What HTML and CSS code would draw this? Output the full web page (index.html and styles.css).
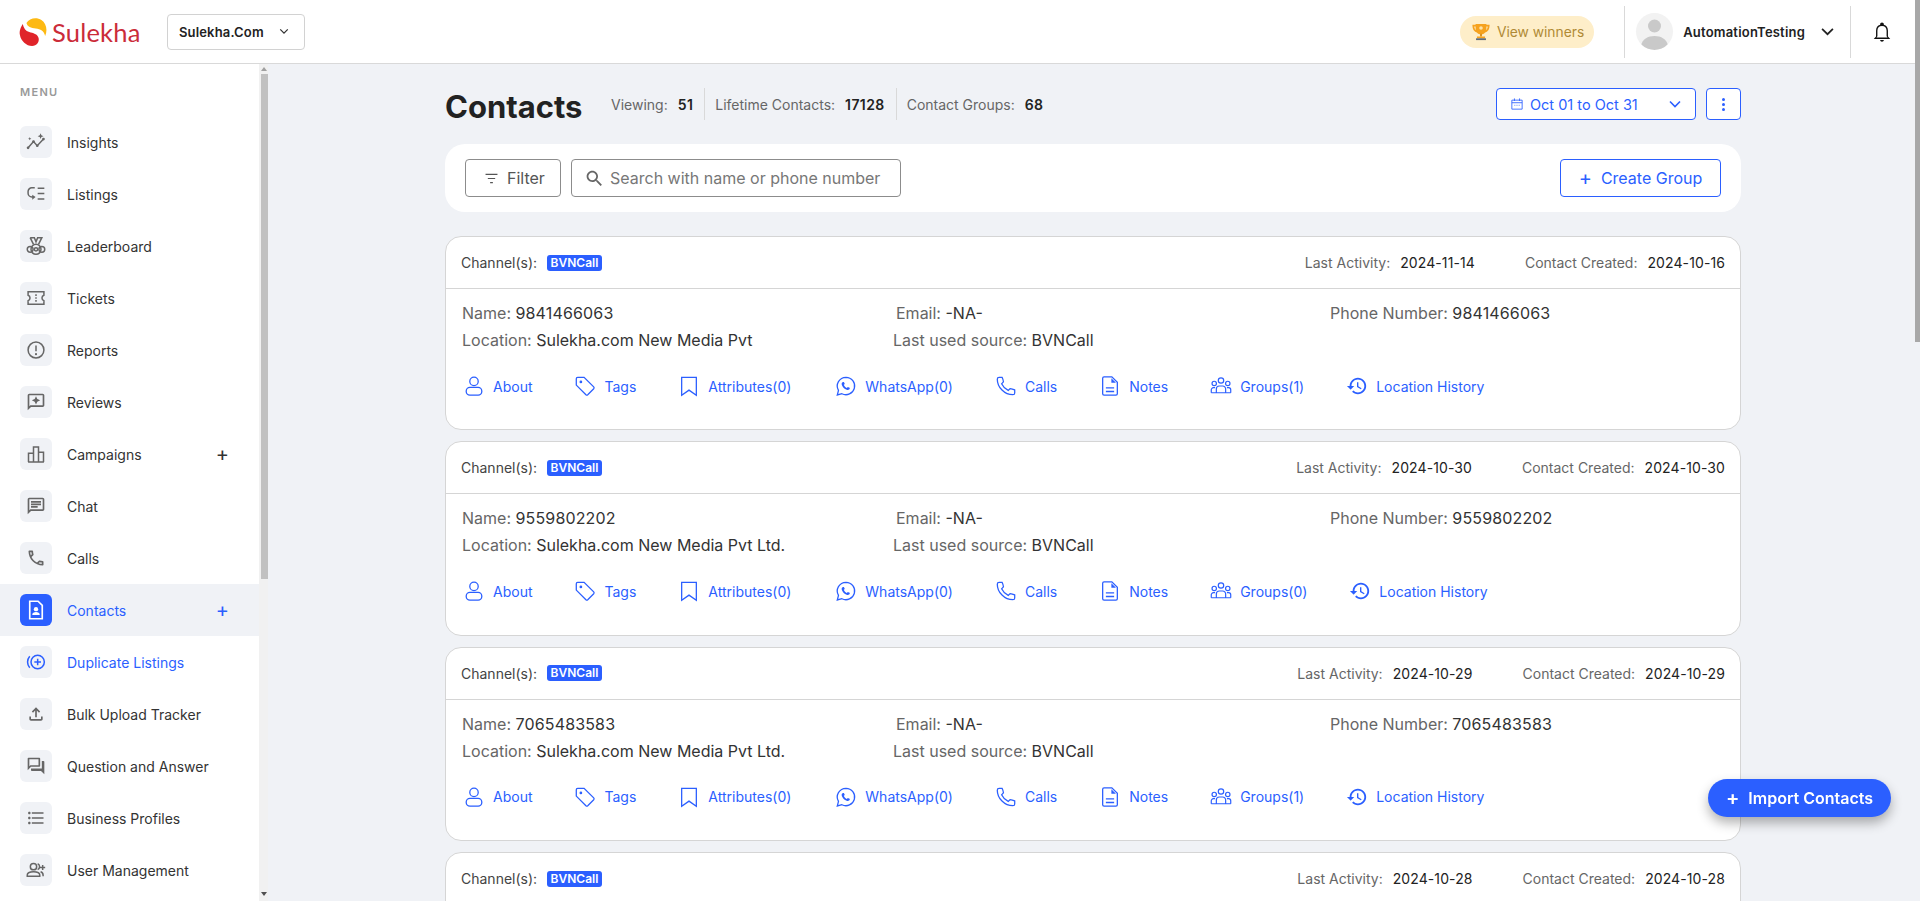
FILE: index.html
```html
<!DOCTYPE html>
<html lang="en">
<head>
    <meta charset="UTF-8">
    <meta name="viewport" content="width=device-width, initial-scale=1.0">
    <title>Contacts</title>
    <link rel="stylesheet" href="styles.css">
</head>
<body>
    <svg class="sprite" xmlns="http://www.w3.org/2000/svg">
        <symbol id="i-about" viewBox="0 0 24 24"><circle cx="12" cy="7" r="4.6"/><rect x="3.5" y="13.5" width="17" height="8.5" rx="4"/></symbol>
        <symbol id="i-tag" viewBox="0 0 24 24"><path d="M2.5 4A1.5 1.5 0 0 1 4 2.5H11L21.5 13a1.5 1.5 0 0 1 0 2L15 21.5a1.5 1.5 0 0 1-2 0L2.5 11z"/><circle cx="7.5" cy="7.5" r=".8"/></symbol>
        <symbol id="i-mark" viewBox="0 0 24 24"><path d="M4 2.5h16v19.5l-8-5.5-8 5.5z"/></symbol>
        <symbol id="i-whatsapp" viewBox="0 0 24 24"><path d="M12 2.5a9.5 9.5 0 0 0-8.2 14.3L2.5 21.8l5-1.4A9.5 9.5 0 1 0 12 2.5z"/><path class="solid" d="M9 7.5c-.4 0-.9.2-1.2.7-.5.7-.7 1.6-.3 2.7.8 2.3 2.8 4.4 5.2 5.2 1.1.4 2 .2 2.7-.3.5-.3.7-.8.7-1.2l-.1-.6-2.1-1-.9 1.1c-1.5-.5-2.9-1.9-3.4-3.4l1.1-.9-1-2.1z"/></symbol>
        <symbol id="i-call" viewBox="0 0 24 24"><path d="M4.5 2.5h3.2c1 2 1.4 3.5 1.5 5L7.2 9.6c1.6 3.4 3.8 5.6 7.2 7.2l2.1-2c1.5.1 3 .5 5 1.5v3.2c0 1.2-.8 2-2 2C10.500 21.500 2.500 13.500 2.500 4.500c0-1.200.8-2 2-2z"/></symbol>
        <symbol id="i-note" viewBox="0 0 24 24"><path d="M5.500 2h8.500l6 6v12.500a1.500 1.500 0 0 1-1.500 1.500h-13A1.500 1.500 0 0 1 4 20.500v-17A1.500 1.500 0 0 1 5.500 2z"/><path class="solid" d="M13.500 3.500l5 5h-5z"/><path d="M7.500 14h9M7.500 18h9"/></symbol>
        <symbol id="i-group" viewBox="0 0 26 24"><circle cx="13" cy="5.500" r="3.200"/><circle cx="5" cy="9" r="2.600"/><circle cx="21" cy="9" r="2.600"/><path d="M7.500 20v-4.500a3.500 3.500 0 0 1 3.500-3.500h4a3.500 3.500 0 0 1 3.500 3.500V20M1.500 20v-3.500A2.500 2.500 0 0 1 4 14h2M24.500 20v-3.500A2.500 2.500 0 0 0 22 14h-2M1.500 20h23"/></symbol>
        <symbol id="i-history" viewBox="0 0 24 24"><path class="solid" d="M13 3c-4.970 0-9 4.030-9 9H1l3.890 3.890.070.140L9 12H6c0-3.870 3.130-7 7-7s7 3.130 7 7-3.130 7-7 7c-1.930 0-3.680-.790-4.940-2.060l-1.420 1.420C8.270 19.990 10.510 21 13 21c4.970 0 9-4.030 9-9s-4.030-9-9-9zm-1 5v5l4.280 2.540.720-1.210-3.500-2.080V8H12z"/></symbol>
    </svg>

    <header class="topbar">
        <a class="logo">
            <svg class="logo-mark" viewBox="0 0 30 30" preserveAspectRatio="none">
                <path fill="#fdb913" d="M8 6C11 1 19 0 24 3c5 3 7 10 4 16-1-5-5-7-10-7.500C13 11 9 10 8 6z"/>
                <path fill="#e0242a" d="M4 7C2 10 0 14 1 18c1 6 7 11 13 11 5 0 8-4 7-8-1-4-6-5-10-6C7 14 5 11 4 7z"/>
            </svg>
            <span class="logo-text">Sulekha</span>
        </a>
        <div class="site-select">
            <span>Sulekha.Com</span>
            <svg class="chev" viewBox="0 0 12 8"><path d="M1.500 1.500 6 6l4.500-4.500"/></svg>
        </div>
        <div class="top-right">
            <div class="winners">
                <svg class="trophy" viewBox="0 0 20 20">
                    <path fill="none" stroke="#f6a21e" stroke-width="2" d="M4.500 3H1.500c0 4 1.500 6 4.500 6.500M15.500 3h3c0 4-1.500 6-4.500 6.500"/>
                    <path fill="#f6a21e" d="M4 1h12v5c0 4-2.500 6.500-6 6.500S4 10 4 6z"/>
                    <circle cx="10" cy="5.500" r="2" fill="#fde3a7"/>
                    <rect x="9" y="12" width="2" height="3" fill="#d98a14"/>
                    <rect x="5.500" y="15" width="9" height="2" fill="#f6a21e"/>
                    <rect x="4.500" y="17" width="11" height="2" fill="#5f6b7a"/>
                </svg>
                <span>View winners</span>
            </div>
            <div class="top-sep"></div>
            <div class="avatar">
                <svg viewBox="0 0 37 37"><circle cx="18.500" cy="13" r="6.500" fill="#c9c9c9"/><path fill="#c9c9c9" d="M5 33c1-7 7-10 13.500-10S31 26 32 33c-3.500 2.500-8 4-13.500 4S8.500 35.500 5 33z"/></svg>
            </div>
            <span class="user-name">AutomationTesting</span>
            <svg class="chev user-chev" viewBox="0 0 12 8"><path d="M1 1.500 6 6.500l5-5"/></svg>
            <div class="top-sep"></div>
            <svg class="bell" viewBox="0 0 24 24"><path d="M12 22.500c1.100 0 2-.6 2-1.700h-4c0 1.100.9 1.700 2 1.700zM18.500 17v-6.500c0-3.100-1.600-5.600-4.500-6.300V3.500c0-1-.9-1.800-2-1.800s-2 .8-2 1.800v.7c-2.900.7-4.500 3.200-4.500 6.300V17L3 19.500h18zM6 18l1-1.500v-6c0-3 1.800-5 5-5s5 2 5 5v6l1 1.500z"/></svg>
        </div>
    </header>

    <div class="layout">
        <aside class="sidebar">
            <div class="menu-title">MENU</div>
            <ul class="menu">
                <li class="menu-item"><span class="menu-icon"><svg viewBox="0 0 24 24"><path class="ln" d="M2.500 19 9 11.500l4.500 5 7.500-8"/><circle class="dot" cx="2.500" cy="19" r="1.600"/><circle class="dot" cx="9" cy="11.500" r="1.600"/><circle class="dot" cx="13.500" cy="16.500" r="1.600"/><circle class="dot" cx="21" cy="8.500" r="1.600"/><path class="dot" d="M17.500 1.500l1 2.500 2.500 1-2.500 1-1 2.500-1-2.500-2.500-1 2.500-1zM4.500 6l.6 1.400 1.400.6-1.400.6-.6 1.400-.6-1.400L2.500 8l1.400-.6z"/></svg></span>Insights</li>
                <li class="menu-item"><span class="menu-icon"><svg viewBox="0 0 24 24"><path class="ln" d="M10.500 4.500H7a4.500 4.500 0 0 0-4.500 4.500v2a4.500 4.500 0 0 0 4.500 4.500h2M14 5h8M14 11.500h8M14 18h8"/><path class="dot" d="M7.500 13l4 2.500-4 3.500z"/></svg></span>Listings</li>
                <li class="menu-item"><span class="menu-icon"><svg viewBox="0 0 24 24"><path class="ln" d="M5 2h5l2 5 2-5h5l-4 8M5 2l4 8"/><circle class="ln" cx="12" cy="16" r="6"/><circle class="ln" cx="12" cy="16" r="2"/><circle class="ln" cx="5" cy="16" r="3.500"/><circle class="ln" cx="19" cy="16" r="3.500"/></svg></span>Leaderboard</li>
                <li class="menu-item"><span class="menu-icon"><svg viewBox="0 0 24 24"><path class="ln" d="M2.500 4.500h19v4.200a3.500 3.500 0 0 0 0 6.600v4.200h-19v-4.200a3.500 3.500 0 0 0 0-6.600z"/><path class="ln" d="M12 7.500v2M12 11v2M12 14.500v2"/></svg></span>Tickets</li>
                <li class="menu-item"><span class="menu-icon"><svg viewBox="0 0 24 24"><circle class="ln" cx="12" cy="12" r="9.500"/><path class="ln" d="M12 6.500v7"/><circle class="dot" cx="12" cy="17" r="1.300"/></svg></span>Reports</li>
                <li class="menu-item"><span class="menu-icon"><svg viewBox="0 0 24 24"><path class="dot" d="M20 2H4c-1.100 0-2 .9-2 2v18l4-4h14c1.100 0 2-.9 2-2V4c0-1.100-.9-2-2-2zm0 14H5.170L4 17.170V4h16v12z"/><path class="dot" d="M12 15l1.570-3.430L17 10l-3.430-1.570L12 5l-1.570 3.430L7 10l3.430 1.570z"/></svg></span>Reviews</li>
                <li class="menu-item"><span class="menu-icon"><svg viewBox="0 0 24 24"><path class="ln" d="M2.500 21.500h19M3 21.500V11h6v10.500M9 21.500V3.500h6v18M15 21.500V10h6v11.500"/></svg></span>Campaigns<span class="menu-plus">+</span></li>
                <li class="menu-item"><span class="menu-icon"><svg viewBox="0 0 24 24"><path class="dot" d="M20 2H4c-1.100 0-2 .9-2 2v18l4-4h14c1.100 0 2-.9 2-2V4c0-1.100-.9-2-2-2zm0 14H5.170L4 17.170V4h16v12zM6 12h8v2H6zm0-3h12v2H6zm0-3h12v2H6z"/></svg></span>Chat</li>
                <li class="menu-item"><span class="menu-icon"><svg viewBox="0 0 24 24"><path class="dot" d="M6.540 5c.06.89.21 1.760.45 2.590l-1.200 1.200c-.41-1.200-.67-2.470-.76-3.790h1.510m9.860 12.020c.85.24 1.720.39 2.600.45v1.490c-1.320-.09-2.590-.35-3.800-.75l1.200-1.190M7.500 3H4c-.55 0-1 .45-1 1 0 9.390 7.610 17 17 17 .55 0 1-.45 1-1v-3.490c0-.55-.45-1-1-1-1.240 0-2.450-.2-3.570-.57-.1-.04-.21-.05-.31-.05-.26 0-.51.1-.71.29l-2.200 2.200c-2.830-1.450-5.150-3.760-6.590-6.590l2.200-2.200c.28-.28.36-.67.25-1.020C8.700 6.450 8.500 5.250 8.500 4c0-.55-.45-1-1-1z"/></svg></span>Calls</li>
                <li class="menu-item active"><span class="menu-icon"><svg viewBox="0 0 24 24"><path d="M4.500 1.500h10l5 5v16h-15z" fill="none" stroke="#fff" stroke-width="2"/><circle cx="12" cy="11" r="2.600" fill="#fff"/><path d="M7.500 18c0-2.500 2-3.500 4.500-3.500s4.500 1 4.500 3.500z" fill="#fff"/></svg></span>Contacts<span class="menu-plus">+</span></li>
                <li class="menu-item blue"><span class="menu-icon"><svg viewBox="0 0 24 24"><circle class="ln" cx="14" cy="12" r="8"/><path class="ln" d="M14 8v8M10 12h8M4.500 5C1 9 1 15 4.500 19"/></svg></span>Duplicate Listings</li>
                <li class="menu-item"><span class="menu-icon"><svg viewBox="0 0 24 24"><path class="dot" d="M18 15v3H6v-3H4v3c0 1.100.9 2 2 2h12c1.100 0 2-.9 2-2v-3h-2zM7 9l1.410 1.410L11 7.830V16h2V7.830l2.590 2.580L17 9l-5-5-5 5z"/></svg></span>Bulk Upload Tracker</li>
                <li class="menu-item"><span class="menu-icon"><svg viewBox="0 0 24 24"><path class="dot" d="M15 4v7H5.170L4 12.170V4h11m1-2H3c-.55 0-1 .45-1 1v14l4-4h10c.55 0 1-.45 1-1V3c0-.55-.45-1-1-1zm5 4h-2v9H6v2c0 .55.45 1 1 1h11l4 4V7c0-.55-.45-1-1-1z"/></svg></span>Question and Answer</li>
                <li class="menu-item"><span class="menu-icon"><svg viewBox="0 0 24 24"><path class="dot" d="M4 10.500c-.83 0-1.500.67-1.500 1.500s.67 1.500 1.500 1.500 1.500-.67 1.500-1.500-.67-1.500-1.500-1.500zm0-6c-.83 0-1.500.67-1.500 1.500S3.170 7.500 4 7.500 5.500 6.830 5.500 6 4.830 4.500 4 4.500zm0 12c-.83 0-1.500.68-1.500 1.500s.68 1.500 1.500 1.500 1.500-.68 1.500-1.500-.67-1.500-1.500-1.500zM7 19h14v-2H7v2zm0-6h14v-2H7v2zm0-8v2h14V5H7z"/></svg></span>Business Profiles</li>
                <li class="menu-item"><span class="menu-icon"><svg viewBox="0 0 24 24"><circle class="ln" cx="9" cy="8" r="3.800"/><path class="ln" d="M1.500 19.500v-1.500c0-2.500 3-4 7.500-4s7.500 1.500 7.500 4v1.500z"/><path class="ln" d="M14 4.500a3.800 3.800 0 0 1 0 7M17.500 14c2 .6 3 2 3 4v1.500M20 6v6M17 9h6"/></svg></span>User Management</li>
            </ul>
        </aside>
        <div class="side-scroll">
            <span class="arrow-up"></span>
            <div class="side-thumb"></div>
            <span class="arrow-down"></span>
        </div>

        <main class="main">
            <div class="page-head">
                <h1>Contacts</h1>
                <div class="stats">
                    <div class="stat">Viewing:<b>51</b></div>
                    <div class="stat">Lifetime Contacts:<b>17128</b></div>
                    <div class="stat">Contact Groups:<b>68</b></div>
                </div>
                <div class="date-picker">
                    <svg class="cal" viewBox="0 0 14 14"><path d="M1 2.500h12v10.500H1zM1 5.500h12M4 .5v3M10 .5v3M4 8.500h1M6.500 8.500h1M9 8.500h1"/></svg>
                    <span>Oct 01 to Oct 31</span>
                    <svg class="chev date-chev" viewBox="0 0 12 8"><path d="M1 1.500 6 6.500l5-5"/></svg>
                </div>
                <div class="more-btn"><i></i><i></i><i></i></div>
            </div>

            <div class="toolbar">
                <div class="filter-btn">
                    <svg viewBox="0 0 16 12"><path d="M1.500 1.500h13M4 6h8M6.500 10.500h3"/></svg>
                    Filter
                </div>
                <label class="search">
                    <svg viewBox="0 0 24 24"><path d="M15.500 14h-.79l-.28-.27C15.410 12.590 16 11.110 16 9.500 16 5.910 13.090 3 9.500 3S3 5.910 3 9.500 5.910 16 9.500 16c1.610 0 3.090-.59 4.230-1.570l.27.28v.79l5 4.990L20.490 19l-4.990-5zm-6 0C7.010 14 5 11.990 5 9.500S7.010 5 9.500 5 14 7.010 14 9.500 11.990 14 9.500 14z"/></svg>
                    <span>Search with name or phone number</span>
                </label>
                <div class="create-btn"><span class="plus">+</span>Create Group</div>
            </div>

            <section class="card">
                <div class="card-head">
                    <span class="lbl">Channel(s):</span><span class="badge">BVNCall</span>
                    <span class="dates"><span class="lbl">Last Activity:</span><span class="val">2024-11-14</span></span>
                    <span class="dates"><span class="lbl">Contact Created:</span><span class="val">2024-10-16</span></span>
                </div>
                <div class="details">
                    <div>Name: <b class="num">9841466063</b></div>
                    <div class="shift">Email: <b>-NA-</b></div>
                    <div>Phone Number: <b class="num">9841466063</b></div>
                    <div>Location: <b>Sulekha.com New Media Pvt</b></div>
                    <div>Last used source: <b>BVNCall</b></div>
                </div>
                <div class="actions">
                    <a><svg><use href="#i-about"/></svg>About</a>
                    <a><svg><use href="#i-tag"/></svg>Tags</a>
                    <a><svg><use href="#i-mark"/></svg>Attributes(0)</a>
                    <a class="wa"><svg><use href="#i-whatsapp"/></svg>WhatsApp(0)</a>
                    <a><svg><use href="#i-call"/></svg>Calls</a>
                    <a><svg><use href="#i-note"/></svg>Notes</a>
                    <a><svg><use href="#i-group"/></svg>Groups(1)</a>
                    <a><svg><use href="#i-history"/></svg>Location History</a>
                </div>
            </section>

            <section class="card">
                <div class="card-head">
                    <span class="lbl">Channel(s):</span><span class="badge">BVNCall</span>
                    <span class="dates"><span class="lbl">Last Activity:</span><span class="val">2024-10-30</span></span>
                    <span class="dates"><span class="lbl">Contact Created:</span><span class="val">2024-10-30</span></span>
                </div>
                <div class="details">
                    <div>Name: <b class="num">9559802202</b></div>
                    <div class="shift">Email: <b>-NA-</b></div>
                    <div>Phone Number: <b class="num">9559802202</b></div>
                    <div>Location: <b>Sulekha.com New Media Pvt Ltd.</b></div>
                    <div>Last used source: <b>BVNCall</b></div>
                </div>
                <div class="actions">
                    <a><svg><use href="#i-about"/></svg>About</a>
                    <a><svg><use href="#i-tag"/></svg>Tags</a>
                    <a><svg><use href="#i-mark"/></svg>Attributes(0)</a>
                    <a class="wa"><svg><use href="#i-whatsapp"/></svg>WhatsApp(0)</a>
                    <a><svg><use href="#i-call"/></svg>Calls</a>
                    <a><svg><use href="#i-note"/></svg>Notes</a>
                    <a><svg><use href="#i-group"/></svg>Groups(0)</a>
                    <a><svg><use href="#i-history"/></svg>Location History</a>
                </div>
            </section>

            <section class="card">
                <div class="card-head">
                    <span class="lbl">Channel(s):</span><span class="badge">BVNCall</span>
                    <span class="dates"><span class="lbl">Last Activity:</span><span class="val">2024-10-29</span></span>
                    <span class="dates"><span class="lbl">Contact Created:</span><span class="val">2024-10-29</span></span>
                </div>
                <div class="details">
                    <div>Name: <b class="num">7065483583</b></div>
                    <div class="shift">Email: <b>-NA-</b></div>
                    <div>Phone Number: <b class="num">7065483583</b></div>
                    <div>Location: <b>Sulekha.com New Media Pvt Ltd.</b></div>
                    <div>Last used source: <b>BVNCall</b></div>
                </div>
                <div class="actions">
                    <a><svg><use href="#i-about"/></svg>About</a>
                    <a><svg><use href="#i-tag"/></svg>Tags</a>
                    <a><svg><use href="#i-mark"/></svg>Attributes(0)</a>
                    <a class="wa"><svg><use href="#i-whatsapp"/></svg>WhatsApp(0)</a>
                    <a><svg><use href="#i-call"/></svg>Calls</a>
                    <a><svg><use href="#i-note"/></svg>Notes</a>
                    <a><svg><use href="#i-group"/></svg>Groups(1)</a>
                    <a><svg><use href="#i-history"/></svg>Location History</a>
                </div>
            </section>

            <section class="card">
                <div class="card-head">
                    <span class="lbl">Channel(s):</span><span class="badge">BVNCall</span>
                    <span class="dates"><span class="lbl">Last Activity:</span><span class="val">2024-10-28</span></span>
                    <span class="dates"><span class="lbl">Contact Created:</span><span class="val">2024-10-28</span></span>
                </div>
            </section>
        </main>
    </div>

    <div class="import-btn"><span class="plus">+</span>Import Contacts</div>
    <div class="page-thumb"></div>
</body>
</html>
```

FILE: styles.css
```css
* {
    box-sizing: border-box;
}

body {
    margin: 0;
    height: 901px;
    overflow: hidden;
    background-color: #f0f2f6;
    font-family: Inter, "Liberation Sans", sans-serif;
    color: #333;
}

.sprite {
    display: none;
}

/* top bar */
.topbar {
    display: flex;
    align-items: center;
    height: 64px;
    background: white;
    border-bottom: 1px solid #d9d9d9;
    padding: 0 27px 0 19px;
}

.logo {
    display: flex;
    align-items: center;
    width: 148px;
}

.logo-mark {
    width: 28px;
    height: 30px;
    margin-right: 5px;
}

.logo-text {
    font-family: Lato, sans-serif;
    font-size: 25.5px;
    color: #cb2c39;
    letter-spacing: .2px;
}

.site-select {
    display: flex;
    align-items: center;
    justify-content: space-between;
    width: 138px;
    height: 36px;
    padding: 0 15px 0 11px;
    border: 1px solid #d2d2d2;
    border-radius: 4px;
    font-size: 13px;
    font-weight: 600;
    letter-spacing: .15px;
    color: #222;
}

.chev {
    width: 10px;
    height: 7px;
    fill: none;
    stroke: #333;
    stroke-width: 1.5;
}

.top-right {
    display: flex;
    align-items: center;
    margin-left: auto;
    height: 52px;
}

.winners {
    display: flex;
    align-items: center;
    gap: 7px;
    height: 32px;
    padding: 0 10px 0 12px;
    border-radius: 16px;
    background: #feeec9;
    color: #b08a35;
    font-size: 13.8px;
}

.trophy {
    width: 18px;
    height: 18px;
}

.top-sep {
    width: 1px;
    height: 52px;
    background: #d9d9d9;
    margin-left: 30px;
}

.avatar {
    width: 37px;
    height: 37px;
    margin-left: 11px;
    border-radius: 50%;
    background: #f2f2f2;
    overflow: hidden;
}

.avatar svg {
    display: block;
}

.user-name {
    margin-left: 10px;
    font-size: 13px;
    font-weight: 600;
    letter-spacing: .2px;
    color: #222;
}

.user-chev {
    width: 13px;
    height: 9px;
    margin-left: 16px;
    stroke: #222;
    stroke-width: 1.6;
}

.user-chev + .top-sep {
    margin-left: 16px;
}

.bell {
    width: 22px;
    height: 22px;
    margin-left: 20px;
    fill: #111;
}

/* sidebar */
.layout {
    display: flex;
    height: 837px;
}

.sidebar {
    width: 259px;
    flex-shrink: 0;
    background: white;
}

.menu-title {
    padding: 22px 20px 0;
    height: 52px;
    font-size: 11px;
    line-height: 13px;
    font-weight: 600;
    letter-spacing: 1.3px;
    color: #999;
}

.menu {
    list-style: none;
    margin: 0;
    padding: 0;
}

.menu-item {
    display: flex;
    align-items: center;
    height: 52px;
    padding-left: 20px;
    font-size: 14px;
    color: #333;
}

.menu-icon {
    display: flex;
    align-items: center;
    justify-content: center;
    width: 32px;
    height: 32px;
    margin-right: 15px;
    border-radius: 6px;
    background: #f0f2f6;
}

.menu-icon svg {
    width: 20px;
    height: 20px;
}

.ln {
    fill: none;
    stroke: #666;
    stroke-width: 1.8;
}

.dot {
    fill: #666;
}

.menu-plus {
    margin-left: auto;
    margin-right: 30px;
    font-size: 20px;
    line-height: 20px;
    font-weight: 400;
}

.active {
    background: #f0f2f6;
    color: #2b5fff;
}

.active .menu-icon {
    background: #2b5fff;
}

.blue {
    color: #2b5fff;
}

.blue .ln {
    stroke: #2b5fff;
}

.side-scroll {
    display: flex;
    flex-direction: column;
    align-items: flex-end;
    width: 9px;
    flex-shrink: 0;
    background: #f1f1f1;
}

.side-thumb {
    width: 7px;
    height: 505px;
    background: #c1c1c1;
}

.arrow-up,
.arrow-down {
    width: 0;
    height: 0;
    border-left: 3px solid transparent;
    border-right: 3px solid transparent;
    margin-right: 1px;
}

.arrow-up {
    border-bottom: 4px solid #a0a0a0;
    margin-top: 3px;
    margin-bottom: 3px;
}

.arrow-down {
    border-top: 4px solid #505050;
    margin-top: auto;
    margin-bottom: 5px;
}

.page-thumb {
    position: fixed;
    top: 0;
    right: 0;
    width: 5px;
    height: 342px;
    background: #a8a8a8;
}

/* main */
.main {
    flex: 1;
    padding: 24px 0 0 177px;
    overflow: hidden;
}

.main > * {
    width: 1296px;
}

.page-head {
    display: flex;
    align-items: center;
    height: 32px;
    margin-bottom: 24px;
}

h1 {
    margin: 0 32px 0 0;
    padding-top: 4px;
    width: 134px;
    font-size: 31px;
    font-weight: 700;
    color: #222;
    white-space: nowrap;
}

.stats {
    display: flex;
    align-items: center;
    height: 32px;
}

.stat {
    display: flex;
    align-items: center;
    height: 32px;
    font-size: 14px;
    color: #666;
    padding-right: 11px;
    margin-right: 10px;
    border-right: 1px solid #d9d9d9;
}

.stat:last-child {
    border-right: none;
}

.stat b {
    margin-left: 10px;
    font-weight: 600;
    letter-spacing: .4px;
    color: #222;
}

.date-picker {
    display: flex;
    align-items: center;
    width: 200px;
    height: 32px;
    margin-left: auto;
    padding: 0 14px;
    border: 1px solid #2b5fff;
    border-radius: 4px;
    background: white;
    color: #2b5fff;
    font-size: 14.5px;
}

.cal {
    width: 12px;
    height: 12px;
    margin-right: 7px;
    fill: none;
    stroke: #2b5fff;
    stroke-width: 1;
}

.date-chev {
    width: 12px;
    height: 8px;
    margin-left: auto;
    stroke: #2b5fff;
    stroke-width: 1.6;
}

.more-btn {
    display: flex;
    flex-direction: column;
    align-items: center;
    justify-content: center;
    gap: 2px;
    width: 35px;
    height: 32px;
    margin-left: 10px;
    border: 1px solid #2b5fff;
    border-radius: 4px;
    background: white;
}

.more-btn i {
    width: 3px;
    height: 3px;
    border-radius: 50%;
    background: #2b5fff;
}

.toolbar {
    display: flex;
    align-items: center;
    height: 68px;
    margin-bottom: 24px;
    padding: 0 20px;
    border-radius: 20px;
    background: white;
}

.filter-btn {
    display: flex;
    align-items: center;
    gap: 8px;
    width: 96px;
    height: 38px;
    margin-right: 10px;
    padding-left: 18px;
    border: 1px solid #8c8c8c;
    border-radius: 4px;
    font-size: 16px;
    color: #555;
}

.filter-btn svg {
    width: 15px;
    height: 11px;
    fill: none;
    stroke: #555;
    stroke-width: 1.3;
}

.search {
    display: flex;
    align-items: center;
    width: 330px;
    height: 38px;
    padding-left: 12px;
    border: 1px solid #8c8c8c;
    border-radius: 4px;
    font-size: 16px;
    color: #777;
}

.search svg {
    width: 21px;
    height: 21px;
    margin-right: 5px;
    fill: #666;
}

.create-btn {
    display: flex;
    align-items: center;
    justify-content: center;
    width: 161px;
    height: 38px;
    margin-left: auto;
    border: 1px solid #2b5fff;
    border-radius: 4px;
    color: #2b5fff;
    font-size: 16px;
}

.plus {
    margin-right: 9px;
    font-size: 20px;
    line-height: 20px;
}

/* cards */
.card {
    height: 194.4px;
    margin-bottom: 11px;
    border: 1px solid #d5d5d5;
    border-radius: 16px;
    background: white;
}

.card-head {
    display: flex;
    align-items: center;
    height: 52px;
    padding: 0 15px;
    border-bottom: 1px solid #d5d5d5;
    font-size: 14px;
}

.lbl {
    color: #444;
}

.badge {
    margin-left: 10px;
    padding: 0 3.5px;
    height: 16px;
    line-height: 16px;
    border-radius: 3px;
    background: #2b5fff;
    color: white;
    font-size: 12px;
    font-weight: 600;
}

.dates {
    display: flex;
}

.dates .lbl {
    color: #666;
}

.badge + .dates {
    margin-left: auto;
}

.dates + .dates {
    margin-left: 50px;
}

.val {
    margin-left: 10px;
    letter-spacing: .1px;
    color: #222;
}

.details {
    display: grid;
    grid-template-columns: 431px 437px 1fr;
    row-gap: 3px;
    padding: 12px 0 0 16px;
    font-size: 16px;
    line-height: 24px;
    color: #666;
}

.details b {
    font-weight: 400;
    color: #333;
}

.details .num {
    letter-spacing: .15px;
}

.shift {
    padding-left: 3px;
}

.actions {
    display: flex;
    align-items: center;
    gap: 42px;
    height: 24px;
    margin-top: 22px;
    padding-left: 17px;
    font-size: 14px;
    color: #2b5fff;
}

.actions a {
    display: flex;
    align-items: center;
    gap: 8px;
}

.actions .wa {
    margin-left: 2px;
}

.actions svg {
    width: 22px;
    height: 22px;
    fill: none;
    stroke: #2b5fff;
    stroke-width: 1.4;
}

.sprite .solid {
    fill: #2b5fff;
    stroke: none;
}

.import-btn {
    position: fixed;
    left: 1708px;
    top: 779px;
    display: flex;
    align-items: center;
    justify-content: center;
    width: 183px;
    height: 38px;
    border-radius: 19px;
    background: #2b5fff;
    color: white;
    font-size: 16px;
    font-weight: 600;
    box-shadow: 0 6px 12px rgba(0, 0, 0, 0.3);
}
```
